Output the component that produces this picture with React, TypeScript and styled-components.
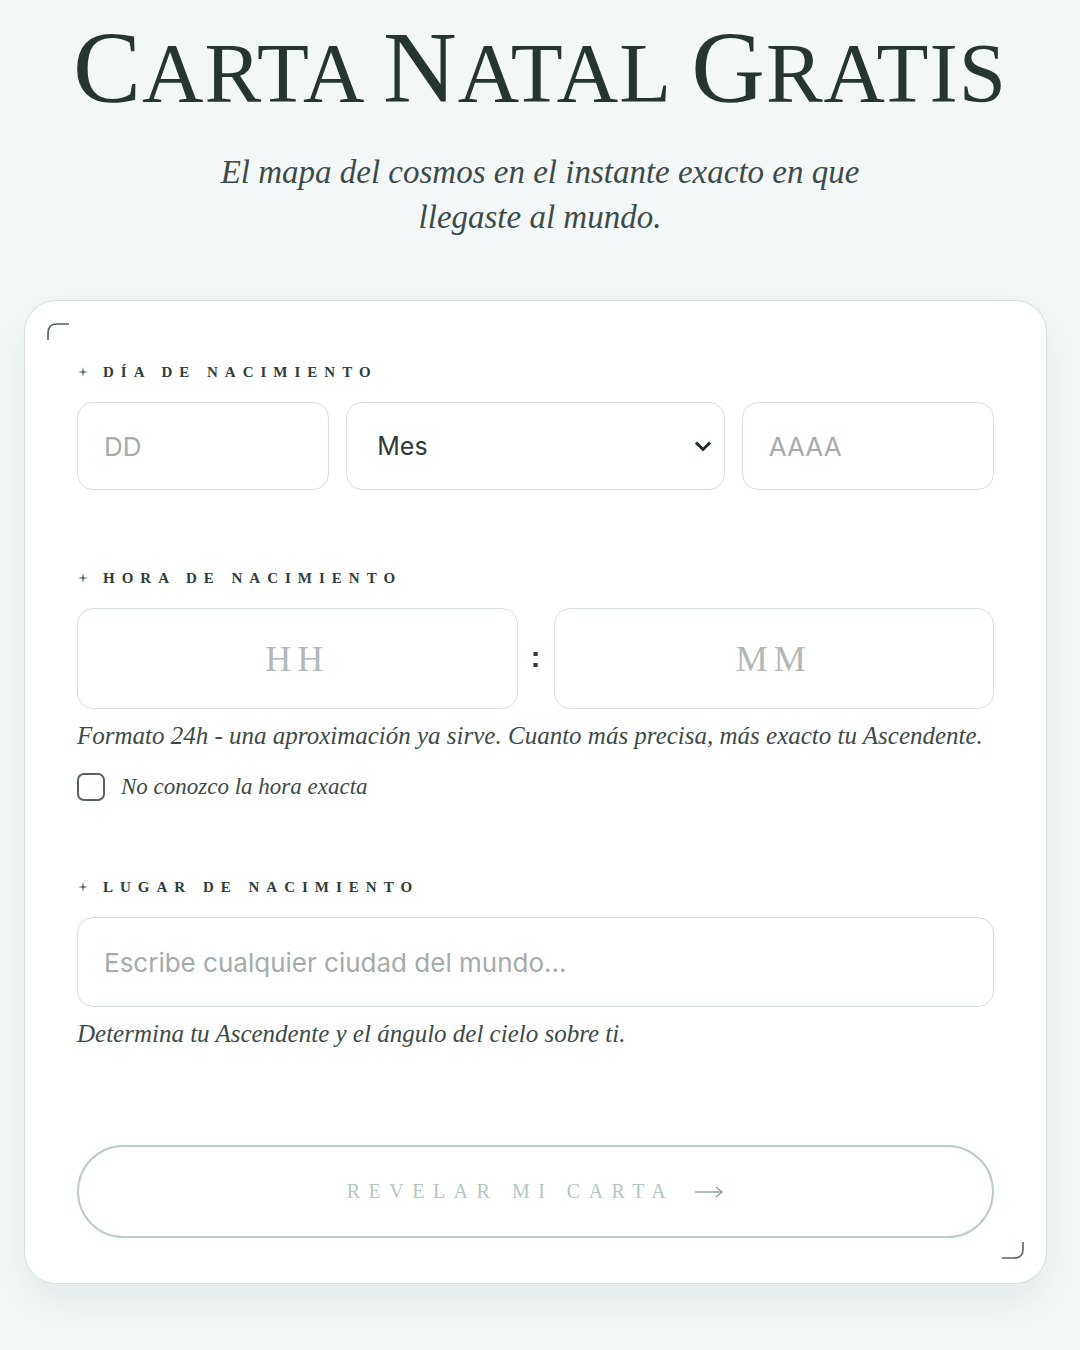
import styled, { createGlobalStyle } from "styled-components";
import { useState } from "react";

const GlobalStyle = createGlobalStyle`
  body {
    margin: 0;
    background: #f3f7f8;
    font-family: "Liberation Serif", serif;
    color: #263532;
  }
`;

const Page = styled.div`
  display: flex;
  flex-direction: column;
  padding-top: 18px;
`;

const Title = styled.h1`
  margin: 0;
  text-align: center;
  font-family: "Liberation Serif", serif;
  font-weight: 400;
  font-size: 85px;
  letter-spacing: 1px;
  line-height: 100px;
  color: #263532;
  text-transform: uppercase;
  .big {
    font-size: 102px;
  }
`;

const Subtitle = styled.p`
  margin: 27px auto 0;
  width: 740px;
  text-align: center;
  font-family: "Liberation Serif", serif;
  font-style: italic;
  font-size: 33px;
  line-height: 45px;
  color: #3d4b48;
`;

const Card = styled.form`
  position: relative;
  margin: 60px 33px 60px 24px;
  padding: 62px 52px 45px;
  background: #fff;
  border: 1px solid #d5dedc;
  border-radius: 32px;
  box-shadow: 0 18px 40px rgba(40, 70, 70, 0.08);
  display: flex;
  flex-direction: column;
`;

const Corner = styled.svg<{ $pos: "tl" | "br" }>`
  position: absolute;
  width: 24px;
  height: 24px;
  ${(p) =>
    p.$pos === "tl"
      ? "top: 20px; left: 22px;"
      : "bottom: 22px; right: 22px; transform: rotate(180deg);"}
`;

const Section = styled.div<{ $gap?: number }>`
  display: flex;
  flex-direction: column;
  margin-top: ${(p) => p.$gap ?? 0}px;
`;

const Label = styled.div`
  display: flex;
  align-items: center;
  gap: 14px;
  font-family: "Liberation Serif", serif;
  font-weight: 700;
  font-size: 15px;
  letter-spacing: 7px;
  color: #2f3d3a;
  text-transform: uppercase;
  height: 18px;
  margin-bottom: 21px;
`;

const Star = () => (
  <svg width="12" height="12" viewBox="0 0 12 12">
    <path
      d="M6 1 L6.8 5.2 L11 6 L6.8 6.8 L6 11 L5.2 6.8 L1 6 L5.2 5.2 Z"
      fill="#4c5b58"
    />
  </svg>
);

const DateRow = styled.div`
  display: grid;
  grid-template-columns: 2fr 3fr 2fr;
  gap: 17px;
`;

const TimeRow = styled.div`
  display: grid;
  grid-template-columns: 1fr 36px 1fr;
  align-items: center;
`;

const Colon = styled.span`
  text-align: center;
  font-family: "Liberation Sans", sans-serif;
  font-weight: 700;
  font-size: 30px;
  color: #2c3a37;
  padding-bottom: 4px;
`;

const Field = styled.input<{ $h?: number; $serif?: boolean }>`
  box-sizing: border-box;
  width: 100%;
  height: ${(p) => p.$h ?? 88}px;
  padding: 0 26px;
  border: 1.5px solid #d6dedc;
  border-radius: 16px;
  background: #fff;
  outline: none;
  font-family: ${(p) => (p.$serif ? `"Liberation Serif", serif` : `Inter, sans-serif`)};
  font-size: ${(p) => (p.$serif ? 36 : 26)}px;
  letter-spacing: ${(p) => (p.$serif ? 6 : 0)}px;
  text-align: ${(p) => (p.$serif ? "center" : "left")};
  color: #2c3a37;
  &::placeholder {
    color: ${(p) => (p.$serif ? "#b1b8b6" : "#a4abaa")};
  }
`;

const SelectWrap = styled.div`
  position: relative;
  height: 88px;
  svg {
    position: absolute;
    right: 10px;
    top: 50%;
    transform: translateY(-50%);
    pointer-events: none;
  }
`;

const Select = styled.select`
  box-sizing: border-box;
  width: 100%;
  height: 100%;
  padding: 0 30px;
  border: 1.5px solid #d6dedc;
  border-radius: 16px;
  background: #fff;
  appearance: none;
  outline: none;
  font-family: Inter, sans-serif;
  font-size: 25px;
  color: #2c3a37;
`;

const Hint = styled.p`
  margin: 12px 0 0;
  font-family: "Liberation Serif", serif;
  font-style: italic;
  font-size: 25px;
  line-height: 30px;
  color: #3c4a47;
`;

const CheckRow = styled.label`
  display: flex;
  align-items: center;
  gap: 16px;
  margin-top: 22px;
  font-family: "Liberation Serif", serif;
  font-style: italic;
  font-size: 23px;
  color: #3c4a47;
  cursor: pointer;
`;

const Box = styled.span<{ $on: boolean }>`
  box-sizing: border-box;
  width: 28px;
  height: 28px;
  border: 2px solid #56635f;
  border-radius: 7px;
  background: ${(p) => (p.$on ? "#56635f" : "#fff")};
`;

const Button = styled.button`
  margin-top: 96px;
  height: 93px;
  border: 2px solid #bcccc8;
  border-radius: 47px;
  background: #fff;
  display: flex;
  align-items: center;
  justify-content: center;
  gap: 20px;
  font-family: "Liberation Serif", serif;
  font-size: 20px;
  letter-spacing: 8.5px;
  color: #b2c6c0;
  text-transform: uppercase;
  cursor: pointer;
`;

const Arrow = () => (
  <svg width="30" height="14" viewBox="0 0 30 14">
    <path d="M1 7 H28 M22 2 L28 7 L22 12" fill="none" stroke="#8fa9a2" strokeWidth="1.6" />
  </svg>
);

const months = [
  "Enero", "Febrero", "Marzo", "Abril", "Mayo", "Junio",
  "Julio", "Agosto", "Septiembre", "Octubre", "Noviembre", "Diciembre",
];

export default function App() {
  const [unknownTime, setUnknownTime] = useState(false);

  return (
    <Page>
      <GlobalStyle />
      <Title>
        <span className="big">C</span>arta <span className="big">N</span>atal{" "}
        <span className="big">G</span>ratis
      </Title>
      <Subtitle>
        El mapa del cosmos en el instante exacto en que llegaste al mundo.
      </Subtitle>

      <Card onSubmit={(e) => e.preventDefault()}>
        <Corner $pos="tl" viewBox="0 0 24 24">
          <path d="M1 19 V12 Q1 3 10 3 H22" fill="none" stroke="#56635f" strokeWidth="1.6" />
        </Corner>
        <Corner $pos="br" viewBox="0 0 24 24">
          <path d="M1 19 V12 Q1 3 10 3 H22" fill="none" stroke="#56635f" strokeWidth="1.6" />
        </Corner>

        <Section>
          <Label>
            <Star />
            Día de nacimiento
          </Label>
          <DateRow>
            <Field placeholder="DD" />
            <SelectWrap>
              <Select defaultValue="">
                <option value="">Mes</option>
                {months.map((m) => (
                  <option key={m}>{m}</option>
                ))}
              </Select>
              <svg width="24" height="24" viewBox="0 0 24 24">
                <path d="M5 8.5 L12 15.5 L19 8.5" fill="none" stroke="#1f2a28" strokeWidth="3" />
              </svg>
            </SelectWrap>
            <Field placeholder="AAAA" />
          </DateRow>
        </Section>

        <Section $gap={79}>
          <Label>
            <Star />
            Hora de nacimiento
          </Label>
          <TimeRow>
            <Field $serif $h={101} placeholder="HH" />
            <Colon>:</Colon>
            <Field $serif $h={101} placeholder="MM" />
          </TimeRow>
          <Hint>
            Formato 24h - una aproximación ya sirve. Cuanto más precisa, más exacto tu
            Ascendente.
          </Hint>
          <CheckRow onClick={() => setUnknownTime(!unknownTime)}>
            <Box $on={unknownTime} />
            No conozco la hora exacta
          </CheckRow>
        </Section>

        <Section $gap={77}>
          <Label>
            <Star />
            Lugar de nacimiento
          </Label>
          <Field $h={90} placeholder="Escribe cualquier ciudad del mundo…" />
          <Hint>Determina tu Ascendente y el ángulo del cielo sobre ti.</Hint>
        </Section>

        <Button type="submit">
          Revelar mi carta <Arrow />
        </Button>
      </Card>
    </Page>
  );
}
